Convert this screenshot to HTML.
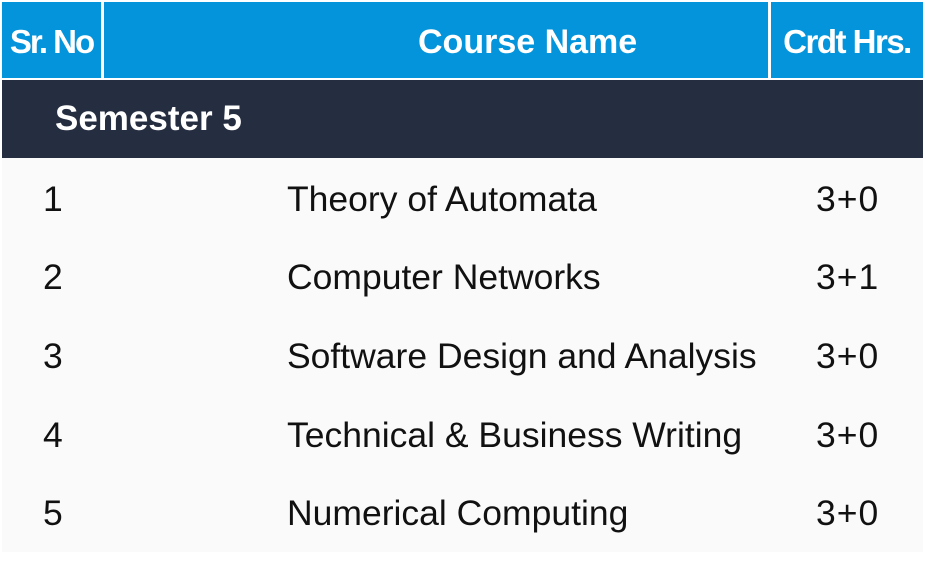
<!DOCTYPE html>
<html><head><style>
body{margin:0;width:926px;height:577px;background:#fff;position:relative;font-family:"Liberation Sans",sans-serif;overflow:hidden}
.h{position:absolute;top:2px;height:76px;background:#0394db;color:#fff;font-weight:bold;font-size:34px;line-height:80px;text-align:center;white-space:nowrap}
.band{position:absolute;left:2px;top:80px;width:921px;height:78px;background:#252d40;color:#fff;font-weight:bold;font-size:35px;line-height:78px}
.body{position:absolute;left:2px;top:158px;width:921px;height:394px;background:#fafafa}
.r{position:absolute;font-size:35.5px;color:#111;line-height:40px;white-space:nowrap}
.n{letter-spacing:1px}
</style></head><body>
<div class="h" style="left:2px;width:99px;letter-spacing:-2px;font-size:33px">Sr. No</div>
<div class="h" style="left:104px;width:664px;text-align:left"><span style="margin-left:314px">Course Name</span></div>
<div class="h" style="left:771px;width:152px;letter-spacing:-1.5px;font-size:33px">Crdt Hrs.</div>
<div class="band"><span style="margin-left:53px">Semester 5</span></div>
<div class="body"></div>
<div class="r" style="left:43px;top:179px">1</div><div class="r" style="left:287px;top:179px">Theory of Automata</div><div class="r n" style="left:816px;top:179px">3+0</div>
<div class="r" style="left:43px;top:257px">2</div><div class="r" style="left:287px;top:257px">Computer Networks</div><div class="r n" style="left:816px;top:257px">3+1</div>
<div class="r" style="left:43px;top:336px">3</div><div class="r" style="left:287px;top:336px">Software Design and Analysis</div><div class="r n" style="left:816px;top:336px">3+0</div>
<div class="r" style="left:43px;top:415px">4</div><div class="r" style="left:287px;top:415px">Technical &amp; Business Writing</div><div class="r n" style="left:816px;top:415px">3+0</div>
<div class="r" style="left:43px;top:493px">5</div><div class="r" style="left:287px;top:493px">Numerical Computing</div><div class="r n" style="left:816px;top:493px">3+0</div>
</body></html>
